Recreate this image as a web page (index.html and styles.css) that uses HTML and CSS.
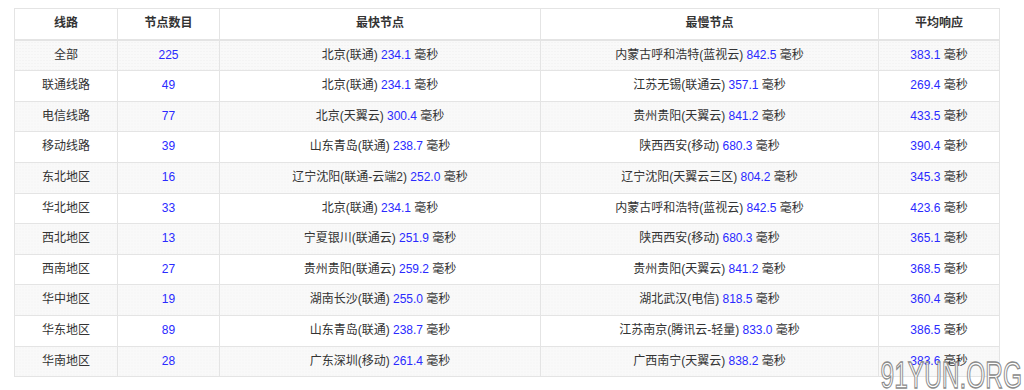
FILE: index.html
```html
<!DOCTYPE html>
<html lang="zh-CN">
<head>
<meta charset="utf-8">
<title>线路节点</title>
<link rel="stylesheet" href="styles.css">
</head>
<body>
<div class="page">
<table class="stats">
<colgroup>
<col class="c1"><col class="c2"><col class="c3"><col class="c4"><col class="c5">
</colgroup>
<thead>
<tr><th>线路</th><th>节点数目</th><th>最快节点</th><th>最慢节点</th><th>平均响应</th></tr>
</thead>
<tbody>
<tr><td>全部</td><td><span class="n">225</span></td><td>北京(联通) <span class="n">234.1</span> 毫秒</td><td>内蒙古呼和浩特(蓝视云) <span class="n">842.5</span> 毫秒</td><td><span class="n">383.1</span> 毫秒</td></tr>
<tr><td>联通线路</td><td><span class="n">49</span></td><td>北京(联通) <span class="n">234.1</span> 毫秒</td><td>江苏无锡(联通云) <span class="n">357.1</span> 毫秒</td><td><span class="n">269.4</span> 毫秒</td></tr>
<tr><td>电信线路</td><td><span class="n">77</span></td><td>北京(天翼云) <span class="n">300.4</span> 毫秒</td><td>贵州贵阳(天翼云) <span class="n">841.2</span> 毫秒</td><td><span class="n">433.5</span> 毫秒</td></tr>
<tr><td>移动线路</td><td><span class="n">39</span></td><td>山东青岛(联通) <span class="n">238.7</span> 毫秒</td><td>陕西西安(移动) <span class="n">680.3</span> 毫秒</td><td><span class="n">390.4</span> 毫秒</td></tr>
<tr><td>东北地区</td><td><span class="n">16</span></td><td>辽宁沈阳(联通-云端2) <span class="n">252.0</span> 毫秒</td><td>辽宁沈阳(天翼云三区) <span class="n">804.2</span> 毫秒</td><td><span class="n">345.3</span> 毫秒</td></tr>
<tr><td>华北地区</td><td><span class="n">33</span></td><td>北京(联通) <span class="n">234.1</span> 毫秒</td><td>内蒙古呼和浩特(蓝视云) <span class="n">842.5</span> 毫秒</td><td><span class="n">423.6</span> 毫秒</td></tr>
<tr><td>西北地区</td><td><span class="n">13</span></td><td>宁夏银川(联通云) <span class="n">251.9</span> 毫秒</td><td>陕西西安(移动) <span class="n">680.3</span> 毫秒</td><td><span class="n">365.1</span> 毫秒</td></tr>
<tr><td>西南地区</td><td><span class="n">27</span></td><td>贵州贵阳(联通云) <span class="n">259.2</span> 毫秒</td><td>贵州贵阳(天翼云) <span class="n">841.2</span> 毫秒</td><td><span class="n">368.5</span> 毫秒</td></tr>
<tr><td>华中地区</td><td><span class="n">19</span></td><td>湖南长沙(联通) <span class="n">255.0</span> 毫秒</td><td>湖北武汉(电信) <span class="n">818.5</span> 毫秒</td><td><span class="n">360.4</span> 毫秒</td></tr>
<tr><td>华东地区</td><td><span class="n">89</span></td><td>山东青岛(联通) <span class="n">238.7</span> 毫秒</td><td>江苏南京(腾讯云-轻量) <span class="n">833.0</span> 毫秒</td><td><span class="n">386.5</span> 毫秒</td></tr>
<tr><td>华南地区</td><td><span class="n">28</span></td><td>广东深圳(移动) <span class="n">261.4</span> 毫秒</td><td>广西南宁(天翼云) <span class="n">838.2</span> 毫秒</td><td><span class="n">383.6</span> 毫秒</td></tr>
</tbody>
</table>
</div>
<div class="watermark">91YUN.ORG</div>
</body>
</html>
```

FILE: styles.css
```css
html, body {
  margin: 0;
  padding: 0;
  background: #ffffff;
}
body {
  font-family: "Liberation Sans", "Noto Sans CJK SC", sans-serif;
  font-size: 12px;
  color: #333333;
  width: 1024px;
  height: 390px;
  overflow: hidden;
  position: relative;
}
.page {
  padding: 8px 0 0 14px;
}
.stats {
  border-collapse: collapse;
  width: 985px;
  table-layout: fixed;
}
.c1 { width: 103px; }
.c2 { width: 102px; }
.c3 { width: 321px; }
.c4 { width: 338px; }
.c5 { width: 121px; }
.stats th,
.stats td {
  border: 1px solid #e4e4e4;
  padding: 6px 4px;
  line-height: 17.6px;
  text-align: center;
  white-space: nowrap;
}
.stats th {
  font-weight: bold;
  color: #333333;
  border-bottom: 2px solid #e4e4e4;
  background: #ffffff;
}
.stats tbody tr:nth-child(odd) td {
  background-color: #f9f9f9;
  background-image: radial-gradient(#efefef 0.6px, transparent 0.8px);
  background-size: 3px 3px;
}
.n {
  color: #2a2aff;
}
.watermark {
  position: absolute;
  right: 2px;
  bottom: -4px;
  font-family: "Liberation Sans", sans-serif;
  font-size: 36px;
  line-height: 36px;
  color: rgba(255, 255, 255, 0.85);
  -webkit-text-stroke: 1.3px #8a8a8a;
  transform: scaleX(0.68);
  transform-origin: right bottom;
  white-space: nowrap;
}
```
